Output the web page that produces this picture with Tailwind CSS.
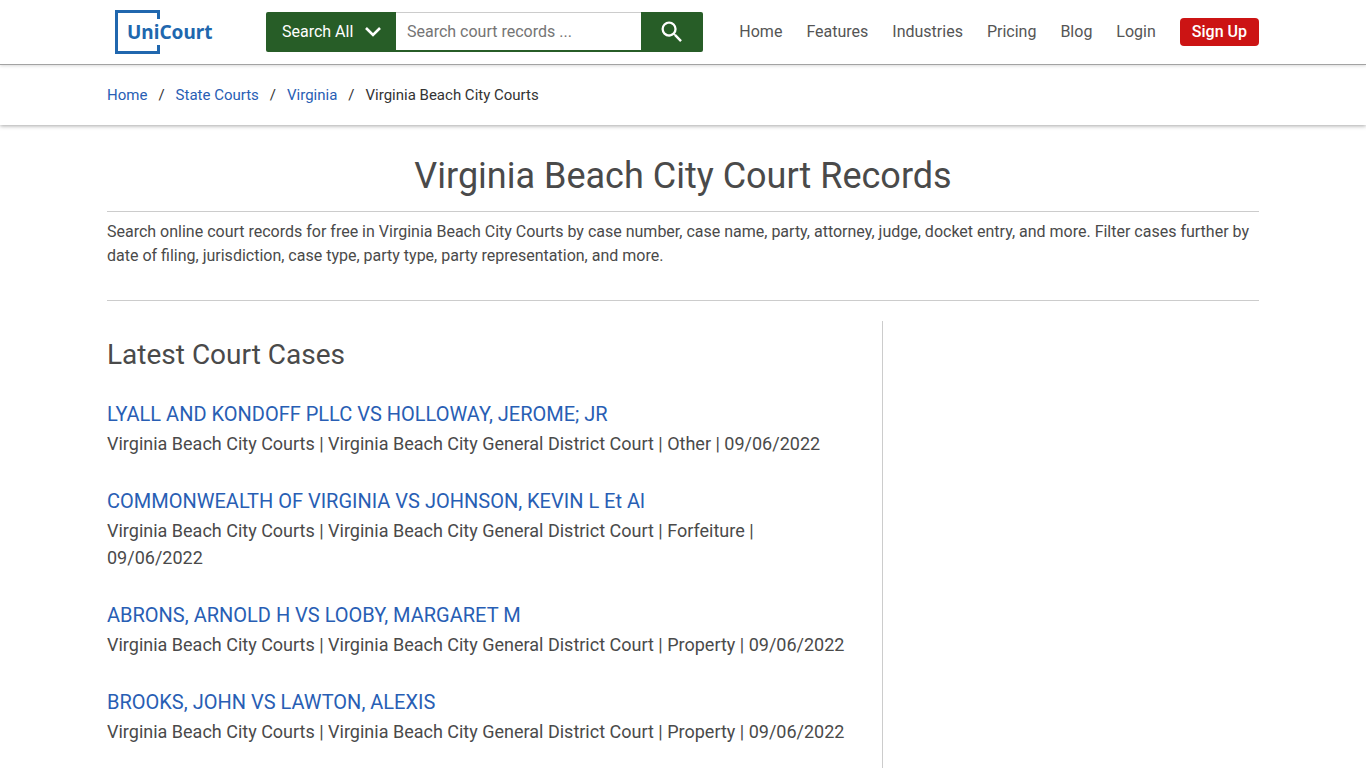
<!DOCTYPE html>
<html lang="en">
<head>
<meta charset="utf-8">
<meta name="viewport" content="width=device-width, initial-scale=1">
<title>Virginia Beach City Court Records</title>
<script src="https://cdn.jsdelivr.net/npm/@tailwindcss/browser@4"></script>
</head>
<body class="flex h-screen flex-col overflow-hidden bg-white font-['Roboto',sans-serif] text-base text-[#4a4a4a]">
<header class="relative z-20 shrink-0 border-b border-[#a3a3a3] bg-white shadow-[0_1px_3px_rgba(0,0,0,0.15)]">
  <div class="mx-auto flex h-16 max-w-6xl items-center">
    <a href="#" aria-label="UniCourt" class="ml-2 shrink-0">
      <svg class="block h-11 w-[100px]" viewBox="0 0 100 44">
        <path d="M43.500 9V1.500H1.500v41h42V35" fill="none" stroke="#2067ae" stroke-width="3"/>
        <text x="12" y="29" fill="#2067ae" font-family="Noto Sans, sans-serif" font-size="19" font-weight="700">UniCourt</text>
      </svg>
    </a>
    <form class="ml-[51px] flex h-10 w-[437px]">
      <div class="relative w-[130px] shrink-0">
        <select aria-label="Search type" class="h-full w-full appearance-none rounded-l-xs bg-[#275d27] pl-4 text-base text-white">
          <option>Search All</option>
        </select>
        <svg class="pointer-events-none absolute top-[15px] right-[15px] h-[10px] w-4" viewBox="0 0 16 10" fill="none" stroke="#fff" stroke-width="2.6"><path d="M1 1l7 7 7-7"/></svg>
      </div>
      <input type="text" aria-label="Search court records" placeholder="Search court records ..." class="min-w-0 flex-1 border-t border-b-2 border-t-[#ccc] border-b-[#275d27] bg-white pl-[11px] text-base placeholder:text-[#757575]">
      <button type="submit" aria-label="Search" class="flex w-[62px] shrink-0 items-center justify-center rounded-r-xs bg-[#275d27]">
        <svg class="size-7" viewBox="0 0 24 24" fill="#fff"><path d="M15.500 14h-.79l-.28-.27A6.470 6.470 0 0 0 16 9.500 6.500 6.500 0 1 0 9.500 16c1.610 0 3.090-.59 4.230-1.570l.27.28v.79l5 4.990L20.490 19l-4.990-5zm-6 0C7.010 14 5 11.990 5 9.500S7.010 5 9.500 5 14 7.010 14 9.500 11.990 14 9.500 14z"/></svg>
      </button>
    </form>
    <nav class="ml-auto flex items-center gap-6 text-[#555]">
      <a href="#">Home</a>
      <a href="#">Features</a>
      <a href="#">Industries</a>
      <a href="#">Pricing</a>
      <a href="#">Blog</a>
      <a href="#">Login</a>
      <a href="#" class="rounded bg-[#cc1414] px-3 py-0.5 font-medium text-white">Sign Up</a>
    </nav>
  </div>
</header>
<nav aria-label="Breadcrumb" class="relative z-10 shrink-0 bg-white shadow-[0_1px_4px_rgba(0,0,0,0.35)]">
  <ol class="mx-auto flex h-[60px] max-w-6xl items-center text-[15px] text-[#333]">
    <li><a href="#" class="text-[#285eb4]">Home</a></li>
    <li class="px-[11px]" aria-hidden="true">/</li>
    <li><a href="#" class="text-[#285eb4]">State Courts</a></li>
    <li class="px-[11px]" aria-hidden="true">/</li>
    <li><a href="#" class="text-[#285eb4]">Virginia</a></li>
    <li class="px-[11px]" aria-hidden="true">/</li>
    <li>Virginia Beach City Courts</li>
  </ol>
</nav>
<main class="mx-auto flex w-full max-w-6xl grow flex-col">
  <h1 class="border-b border-[#ccc] pt-[31px] pb-[15px] text-center text-4xl">Virginia Beach City Court Records</h1>
  <p class="border-b border-[#ccc] pt-2 pb-8">Search online court records for free in Virginia Beach City Courts by case number, case name, party, attorney, judge, docket entry, and more. Filter cases further by date of filing, jurisdiction, case type, party type, party representation, and more.</p>
  <div class="mt-5 flex grow">
    <section class="w-[776px] border-r border-[#ccc] pr-8">
      <h2 class="pt-4 text-[28px] leading-9">Latest Court Cases</h2>
      <ul class="mt-[25px] space-y-7 text-lg leading-[27px]">
        <li>
          <a href="#" class="block text-xl leading-8 text-[#285eb4]">LYALL AND KONDOFF PLLC VS HOLLOWAY, JEROME; JR</a>
          <p>Virginia Beach City Courts | Virginia Beach City General District Court | Other | 09/06/2022</p>
        </li>
        <li>
          <a href="#" class="block text-xl leading-8 text-[#285eb4]">COMMONWEALTH OF VIRGINIA VS JOHNSON, KEVIN L Et Al</a>
          <p>Virginia Beach City Courts | Virginia Beach City General District Court | Forfeiture | 09/06/2022</p>
        </li>
        <li>
          <a href="#" class="block text-xl leading-8 text-[#285eb4]">ABRONS, ARNOLD H VS LOOBY, MARGARET M</a>
          <p>Virginia Beach City Courts | Virginia Beach City General District Court | Property | 09/06/2022</p>
        </li>
        <li>
          <a href="#" class="block text-xl leading-8 text-[#285eb4]">BROOKS, JOHN VS LAWTON, ALEXIS</a>
          <p>Virginia Beach City Courts | Virginia Beach City General District Court | Property | 09/06/2022</p>
        </li>
      </ul>
    </section>
  </div>
</main>
</body>
</html>
